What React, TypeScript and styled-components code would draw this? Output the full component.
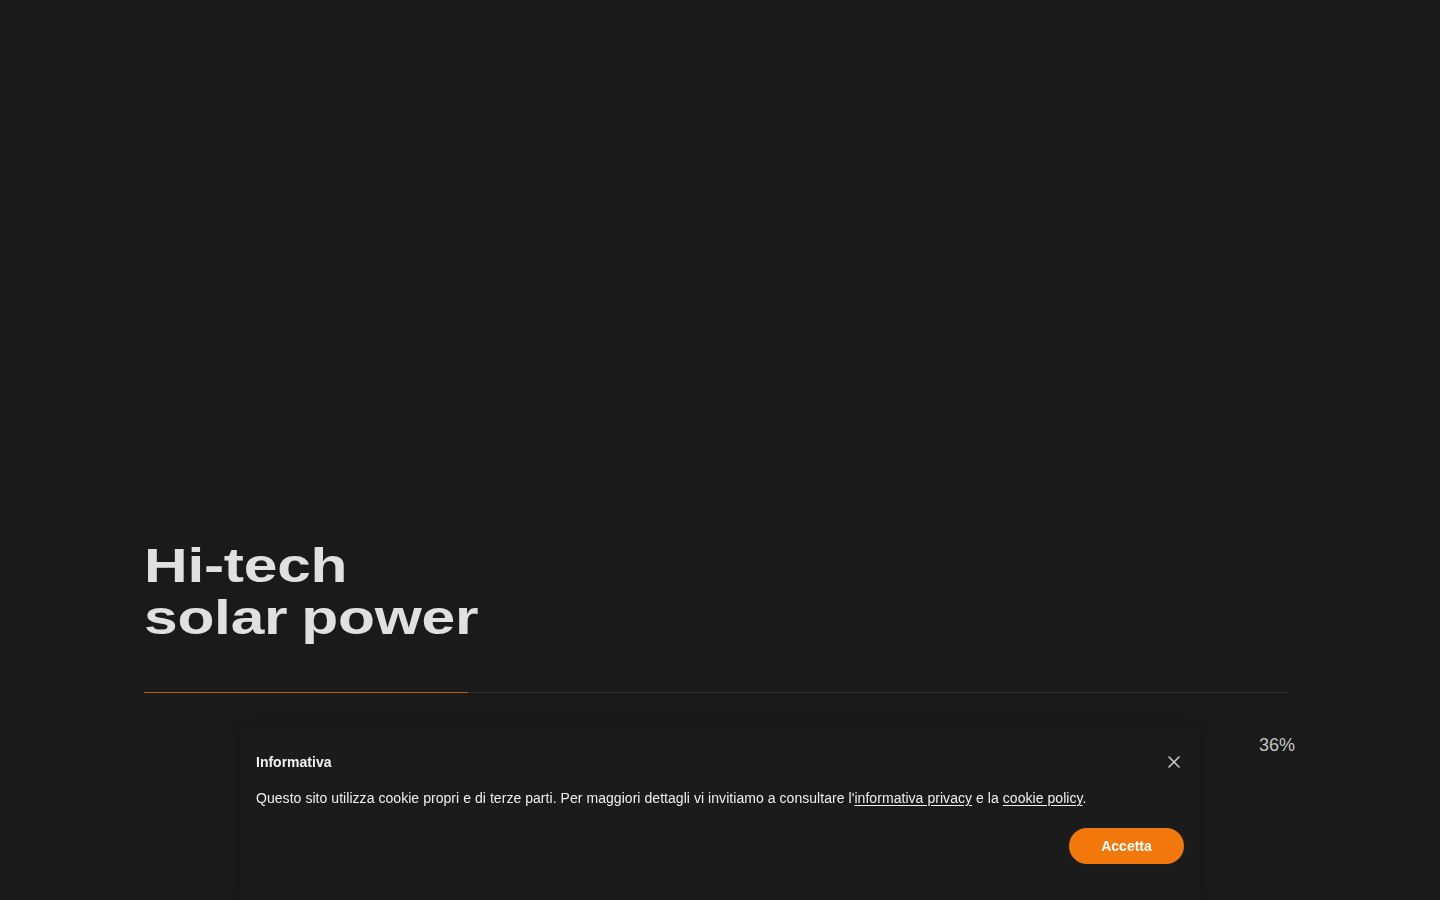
import React from "react";
import styled, { createGlobalStyle } from "styled-components";

const Global = createGlobalStyle`
  html, body { margin: 0; padding: 0; background: #1a1a1a; }
  body { font-family: "Liberation Sans", Arial, Helvetica, sans-serif; color: #e2e2e2; overflow: hidden; }
  * { box-sizing: border-box; }
`;

const Page = styled.div`
  width: 1440px;
  height: 900px;
  background: #1a1a1a;
  display: flex;
  flex-direction: column;
  padding: 0 152px 0 144px;
`;

const Hero = styled.section`
  display: flex;
  flex-direction: column;
  padding-top: 540px;
`;

const Heading = styled.h1`
  margin: 0;
  font-family: "Liberation Sans", Arial, sans-serif;
  font-weight: 700;
  font-size: 48px;
  line-height: 52px;
  color: #e0e0e0;
  letter-spacing: -0.2px;
  word-spacing: -2px;
  transform: scaleX(1.26);
  transform-origin: left center;
  width: max-content;
`;

const Track = styled.div`
  margin-top: 48px;
  height: 1px;
  width: 1144px;
  background: #2b2b2b;
  display: flex;
`;

const Fill = styled.div`
  height: 1px;
  background: #b8620f;
`;

const PercentRow = styled.div`
  display: flex;
  justify-content: flex-end;
  margin-top: 42px;
  margin-right: -7px;
`;

const Percent = styled.span`
  font-family: "Liberation Sans", Arial, sans-serif;
  font-size: 18px;
  color: #c4c4c4;
`;

const Banner = styled.div`
  position: fixed;
  left: 240px;
  width: 960px;
  top: 728px;
  bottom: 0;
  background: #1b1b1b;
  box-shadow: 0 0 14px rgba(0, 0, 0, 0.2);
  padding: 24px 16px;
  display: flex;
  flex-direction: column;
`;

const BannerHead = styled.div`
  display: flex;
  align-items: center;
  justify-content: space-between;
  height: 20px;
`;

const Title = styled.span`
  font-size: 14px;
  font-weight: 700;
  color: #f2f2f2;
`;

const Close = styled.button`
  border: 0;
  background: transparent;
  padding: 0;
  width: 20px;
  height: 20px;
  display: flex;
  align-items: center;
  justify-content: center;
  color: #d0d0d0;
  cursor: pointer;
`;

const Text = styled.p`
  margin: 16px 0 0;
  font-size: 14px;
  line-height: 20px;
  color: #efefef;
  letter-spacing: 0.05px;
`;

const Link = styled.a`
  color: #efefef;
  text-decoration: underline;
  text-underline-offset: 2px;
`;

const Actions = styled.div`
  display: flex;
  justify-content: flex-end;
  margin-top: 20px;
`;

const Accept = styled.button`
  border: 0;
  background: #f2780c;
  color: #ffffff;
  font-family: "Liberation Sans", Arial, sans-serif;
  font-weight: 700;
  font-size: 14px;
  width: 115px;
  height: 36px;
  border-radius: 18px;
  cursor: pointer;
`;

export default function App() {
  const progress = 324 / 1144;
  return (
    <>
      <Global />
      <Page>
        <Hero>
          <Heading>
            Hi-tech
            <br />
            solar power
          </Heading>
          <Track>
            <Fill style={{ width: `${progress * 100}%` }} />
          </Track>
          <PercentRow>
            <Percent>36%</Percent>
          </PercentRow>
        </Hero>
      </Page>
      <Banner>
        <BannerHead>
          <Title>Informativa</Title>
          <Close aria-label="Chiudi">
            <svg width="12" height="12" viewBox="0 0 12 12">
              <path d="M1 1L11 11M11 1L1 11" stroke="currentColor" strokeWidth="1.5" strokeLinecap="round" />
            </svg>
          </Close>
        </BannerHead>
        <Text>
          Questo sito utilizza cookie propri e di terze parti. Per maggiori dettagli vi invitiamo a consultare l'
          <Link href="#">informativa privacy</Link> e la <Link href="#">cookie policy</Link>.
        </Text>
        <Actions>
          <Accept>Accetta</Accept>
        </Actions>
      </Banner>
    </>
  );
}
